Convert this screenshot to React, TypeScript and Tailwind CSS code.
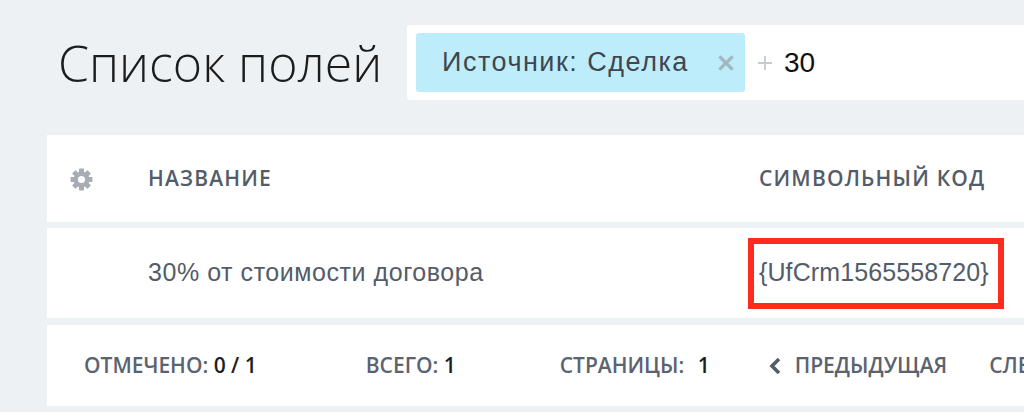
import React from 'react';

const openSans = { fontFamily: '"Open Sans", "Noto Sans", sans-serif' };
const helv = { fontFamily: '"Liberation Sans", Arial, sans-serif' };

function Gear() {
  const teeth = [0, 45, 90, 135, 180, 225, 270, 315];
  return (
    <svg width="23" height="23" viewBox="0 0 24 24">
      {teeth.map((a) => (
        <rect key={a} x="9.4" y="0.6" width="5.2" height="5.4" rx="0.6" fill="#a8adb3" transform={`rotate(${a} 12 12)`} />
      ))}
      <circle cx="12" cy="12" r="8.2" fill="#a8adb3" />
      <circle cx="12" cy="12" r="3.7" fill="#ffffff" />
    </svg>
  );
}

export default function App() {
  return (
    <div className="w-[1024px] h-[412px] overflow-hidden bg-[#edf1f4]">
      {/* Title + filter */}
      <div className="flex items-center pt-[25px] pl-[58px]">
        <div className="w-[349px] shrink-0">
          <h1 className="text-[50px] font-light leading-none text-[#1c1c1c] whitespace-nowrap" style={openSans}>
            Список полей
          </h1>
        </div>
        <div className="flex h-[75px] w-[700px] shrink-0 items-center rounded-[3px] bg-white pl-[9px]">
          <div className="flex h-[59px] w-[329px] items-center rounded-[3px] bg-[#bdedfa] pl-[26px]">
            <span className="text-[27px] tracking-[1.5px] text-[#3f464f] whitespace-nowrap" style={helv}>
              Источник: Сделка
            </span>
            <svg className="ml-auto mr-[11px]" width="16" height="16" viewBox="0 0 16 16">
              <path d="M2.5 2.5 L13.5 13.5 M13.5 2.5 L2.5 13.5" stroke="#a3b7c0" strokeWidth="3.2" strokeLinecap="square" />
            </svg>
          </div>
          <svg className="ml-[13px]" width="14" height="14" viewBox="0 0 14 14">
            <path d="M7 0 V14 M0 7 H14" stroke="#c6cbcf" strokeWidth="1.8" />
          </svg>
          <span className="ml-[12px] text-[28px] text-[#111]" style={helv}>
            30
          </span>
        </div>
      </div>

      {/* Table */}
      <div className="mt-[35px] ml-[47px] w-[1100px]">
        <div className="flex h-[87px] items-center bg-white">
          <div className="w-[101px] shrink-0 pl-[23px] pt-[2px]">
            <Gear />
          </div>
          <div className="w-[600px] shrink-0 text-[21px] font-semibold tracking-[1.2px] text-[#535c69]" style={openSans}>
            НАЗВАНИЕ
          </div>
          <div className="pl-[11px] text-[21px] font-semibold tracking-[1.2px] text-[#535c69] whitespace-nowrap" style={openSans}>
            СИМВОЛЬНЫЙ КОД
          </div>
        </div>

        <div className="mt-[6px] flex h-[90px] items-center bg-white">
          <div className="w-[101px] shrink-0" />
          <div className="w-[600px] shrink-0 text-[25px] tracking-[0.55px] text-[#535c69] whitespace-nowrap" style={helv}>
            30% от стоимости договора
          </div>
          <div className="flex h-[71px] w-[256px] items-center border-[6px] border-[#ff2b1e] pl-[5px] pb-[1px]">
            <span className="text-[25px] tracking-[0.1px] text-[#535c69] whitespace-nowrap" style={helv}>
              {'{UfCrm1565558720}'}
            </span>
          </div>
        </div>

        <div
          className="mt-[7px] flex h-[81px] items-center bg-white pl-[37px] text-[21px] font-semibold text-[#5b6370] whitespace-nowrap"
          style={openSans}
        >
          <span>
            ОТМЕЧЕНО: <span className="text-[#1e1e1e]">0 / 1</span>
          </span>
          <span className="ml-[109px]">
            ВСЕГО: <span className="text-[#1e1e1e]">1</span>
          </span>
          <span className="ml-[104px]">
            СТРАНИЦЫ: <span className="ml-[8px] text-[#1e1e1e]">1</span>
          </span>
          <span className="ml-[58px] flex items-center">
            <svg width="14" height="20" viewBox="0 0 14 20" className="mr-[13px]">
              <path d="M11 3 L4 10 L11 17" stroke="#535c69" strokeWidth="3.6" fill="none" />
            </svg>
            ПРЕДЫДУЩАЯ
          </span>
          <span className="ml-[42px]">СЛЕДУЮЩАЯ</span>
        </div>
      </div>
    </div>
  );
}
